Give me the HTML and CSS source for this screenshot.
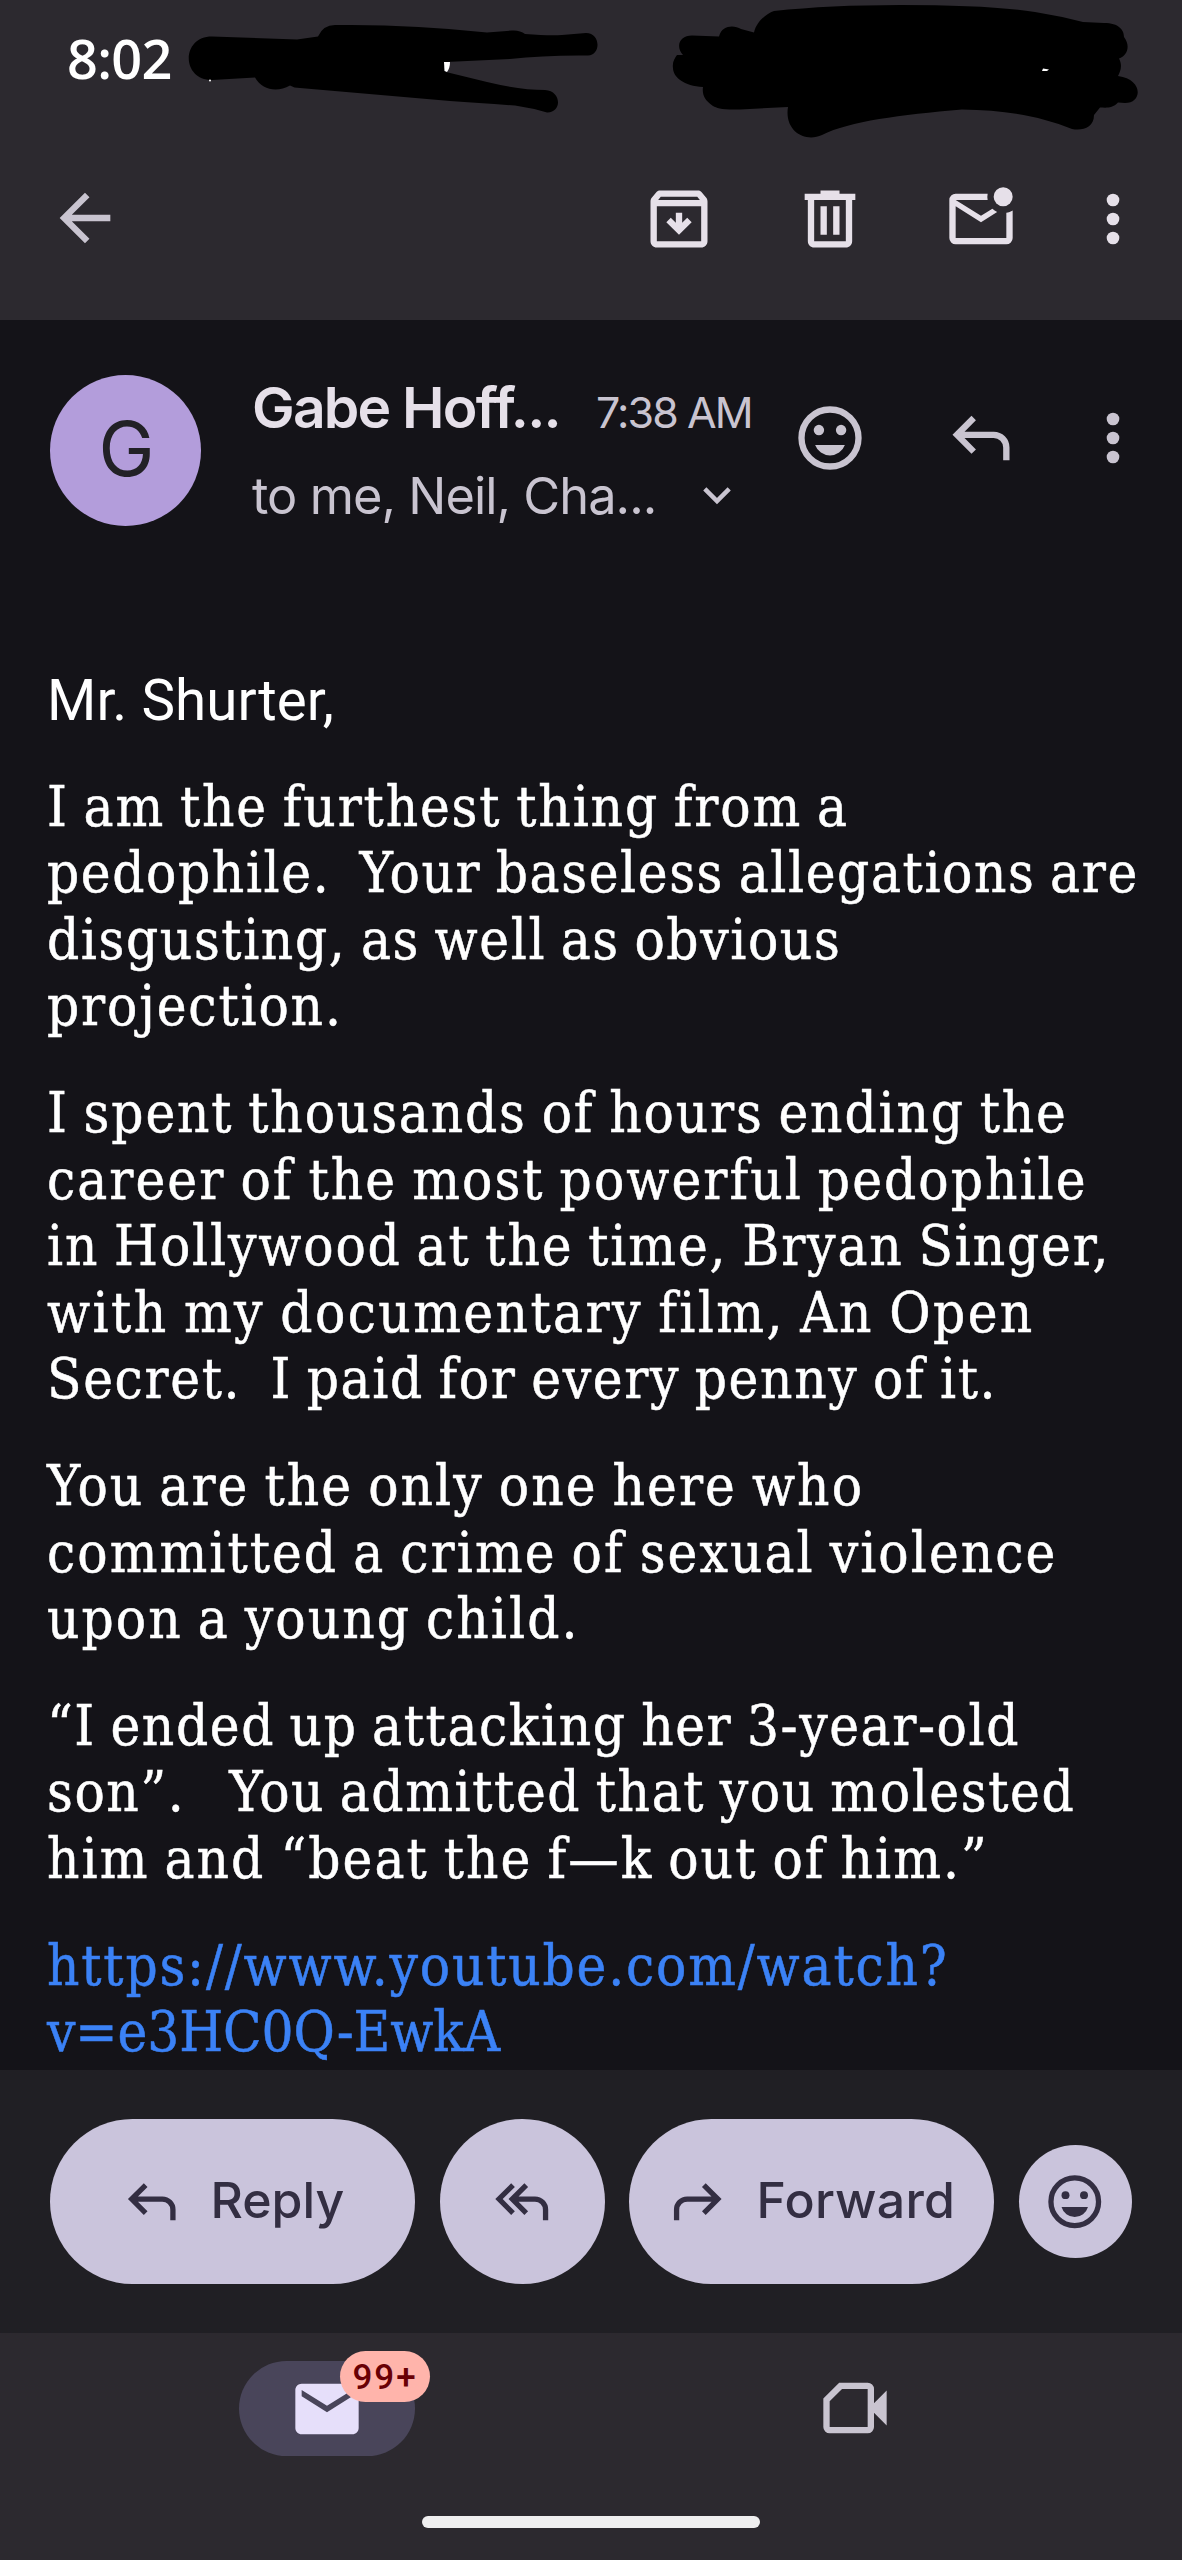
FILE: index.html
```html
<!DOCTYPE html>
<html lang="en">
<head>
<meta charset="utf-8">
<title>Mail</title>
<link rel="stylesheet" href="styles.css">
</head>
<body>
<div class="screen">
  <header class="top">
    <div class="status">
      <span class="clock">8:02</span>
      <svg class="marks" width="1182" height="150" viewBox="0 0 1182 150" aria-hidden="true">
        <path d="M212 36.500L297 39.500L318 36.500Q323 25 335 25Q410 24 487 32.500L512 30.500Q520 30 525 34Q550 36 562 35L586 33C601 33 601 55.500 588 55.500Q545 55 510 59L446 62V72L487 82Q520 90 545 90C562 91 562 113 547 112.500Q532 108 515 105.500Q480 103 450 101L300 88Q294 88 290 85.500C277 93 262 90 255 77.500L212 80C181 80 181 36.500 212 36.500Z"/>
        <path d="M683 55C675 46 680 35.500 692 35.500L719 36.500C722 25 734 25 741 29L754 32.500C757 20 768 13 774 11Q830 5 900 5Q990 5 1035 12Q1060 16 1083 22L1104 23C1119 23 1124 30 1124 37C1131 46 1127 56 1119 58.500C1123 66 1120 72 1118 76C1143 79 1143 103 1125 103L1118 102.500C1112 109 1105 107.500 1100 107.500L1094 115C1094 128 1082 131 1072 129C1040 116 1005 110 962 109.500C900 115 850 121 822 135C805 143 784 131 788 107L740 109.500C721 110 717 108 713 106C704 100 702 94 703 87C684 86 673 77 673 68C672 62 675 58 677 55Z"/>
        <path class="glint" d="M444 62L450 62Q450 68 447 72L444.500 71Z"/>
        <path class="glint" d="M1043 68.500L1049 69.500L1047 71L1042 71Z"/>
        <circle class="glint" cx="210" cy="80.500" r="1"/>
      </svg>
    </div>
    <div class="toolbar">
      <svg class="icon back" viewBox="0 0 24 24"><path d="M20 11H7.830l5.590-5.590L12 4l-8 8 8 8 1.410-1.410L7.830 13H20z"/></svg>
      <div class="tools">
        <svg class="icon" viewBox="0 0 24 24"><path fill-rule="evenodd" d="M20.540 5.230l-1.390-1.680C18.880 3.210 18.470 3 18 3H6c-.47 0-.88.21-1.160.55L3.460 5.230C3.170 5.570 3 6.020 3 6.500V19c0 1.100.9 2 2 2h14c1.100 0 2-.9 2-2V6.500c0-.48-.17-.93-.46-1.270zM6.240 5h11.520l.83 1H5.420zM5 19V8h14v11zm6-9h2v3.200l1.600-1.600L16 13l-4 4-4-4 1.400-1.400 1.600 1.600z"/></svg>
        <svg class="icon" viewBox="0 0 24 24"><path fill-rule="evenodd" d="M15 4V3H9v1H4v2h1v13c0 1.100.9 2 2 2h10c1.100 0 2-.9 2-2V6h1V4zm2 15H7V6h10zM9 8h2v9H9zm4 0h2v9h-2z"/></svg>
        <svg class="icon" viewBox="0 0 24 24"><circle cx="19" cy="5" r="3"/><path d="M14.100 4H4a2 2 0 0 0-2 2v12a2 2 0 0 0 2 2h16a2 2 0 0 0 2-2V9.300c-.6.400-1.300.65-2 .7v8H4V8l8 5 5.100-3.200a5 5 0 0 1-1.500-1L12 11 4 6h10.100A5 5 0 0 1 14.100 4z"/></svg>
        <svg class="icon more" viewBox="0 0 24 24"><circle cx="12" cy="6" r="2"/><circle cx="12" cy="12" r="2"/><circle cx="12" cy="18" r="2"/></svg>
      </div>
    </div>
  </header>

  <main class="message">
    <section class="sender">
      <div class="avatar">G</div>
      <div class="meta">
        <div class="line"><span class="name">Gabe Hoff...</span><span class="time">7:38 AM</span></div>
        <div class="line"><span class="to">to me, Neil, Cha...</span><svg class="chevron" viewBox="0 0 28 18"><path d="M1.800 1.800L14 14L26.200 1.800"/></svg></div>
      </div>
      <div class="tools muted">
        <svg class="icon" viewBox="0 0 24 24"><circle class="ring" cx="12" cy="12" r="9"/><circle cx="8.500" cy="9.500" r="1.650"/><circle cx="15.500" cy="9.500" r="1.650"/><path d="M7.300 14.200h9.400a5 5 0 0 1-9.400 0z"/></svg>
        <svg class="icon" viewBox="0 0 24 24"><path d="M19 19v-4a3 3 0 0 0-3-3H6.800l3.600 3.600L9 17l-6-6 6-6 1.400 1.400L6.800 10H16a5 5 0 0 1 5 5v4z"/></svg>
        <svg class="icon more" viewBox="0 0 24 24"><circle cx="12" cy="6" r="2"/><circle cx="12" cy="12" r="2"/><circle cx="12" cy="18" r="2"/></svg>
      </div>
    </section>

    <article class="body">
      <p class="greeting">Mr. Shurter,</p>
      <p>I am the furthest thing from a<br><span class="tight">pedophile.&nbsp; Your baseless allegations are</span><br><span class="tight">disgusting, as well as obvious</span><br>projection.</p>
      <p>I spent thousands of hours ending the<br><span class="loose">career of the most powerful pedophile</span><br>in Hollywood at the time, Bryan Singer,<br><span class="looser">with my documentary film, An Open</span><br><span class="tighter">Secret.&nbsp; I paid for every penny of it.</span></p>
      <p><span class="loose">You are the only one here who</span><br><span class="loose">committed a crime of sexual violence</span><br><span class="loose">upon a young child.</span></p>
      <p><span class="tight">“I ended up attacking her 3-year-old</span><br><span class="tight">son”.&nbsp;&nbsp; You admitted that you molested</span><br><span class="loose">him and “beat the f—k out of him.”</span></p>
      <p class="link"><span class="url">https://www.youtube.com/watch?</span><br><span class="narrow">v=e3HC0Q-EwkA</span></p>
    </article>
  </main>

  <section class="actions">
    <div class="btn wide">
      <svg class="glyph" viewBox="0 0 24 24"><path d="M19 19v-4a3 3 0 0 0-3-3H6.800l3.600 3.600L9 17l-6-6 6-6 1.400 1.400L6.800 10H16a5 5 0 0 1 5 5v4z"/></svg>
      <span class="label reply">Reply</span>
    </div>
    <div class="btn round">
      <svg class="glyph" viewBox="0 0 24 24"><path d="M20 19v-4a3 3 0 0 0-3-3h-6.200l3.600 3.600L13 17l-6-6 6-6 1.400 1.400L10.800 10H17a5 5 0 0 1 5 5v4zM8 17l-6-6 6-6 1.400 1.400L4.800 11l4.600 4.600z"/></svg>
    </div>
    <div class="btn wide forward">
      <svg class="glyph" viewBox="0 0 24 24"><path d="M5 19v-4a3 3 0 0 1 3-3h9.200l-3.600 3.600L15 17l6-6-6-6-1.400 1.400 3.600 3.600H8a5 5 0 0 0-5 5v4z"/></svg>
      <span class="label fwd">Forward</span>
    </div>
    <div class="btn small">
      <svg class="glyph" viewBox="0 0 24 24"><circle class="ring" cx="12" cy="12" r="9"/><circle cx="8.500" cy="9.500" r="1.500"/><circle cx="15.500" cy="9.500" r="1.500"/><path d="M7 14h10a5.200 5.200 0 0 1-10 0z"/></svg>
    </div>
  </section>

  <footer class="nav">
    <div class="tabs">
      <div class="tab">
        <div class="pill">
          <svg class="icon" viewBox="0 0 24 24"><path d="M20 4H4c-1.100 0-2 .9-2 2v12c0 1.100.9 2 2 2h16c1.100 0 2-.9 2-2V6c0-1.100-.9-2-2-2zm0 4l-8 5-8-5V6l8 5 8-5z"/></svg>
          <span class="badge">99+</span>
        </div>
      </div>
      <div class="tab">
        <svg class="icon video" viewBox="0 0 24 24"><path fill-rule="evenodd" d="M7 4h9a2 2 0 0 1 2 2v4.500l4-4v11l-4-4V18a2 2 0 0 1-2 2H4a2 2 0 0 1-2-2V9zm.9 2L4 9.900V18h12V6z"/></svg>
      </div>
    </div>
    <div class="home"></div>
  </footer>
</div>
</body>
</html>
```

FILE: styles.css
```css
* { box-sizing: border-box; }
body { margin: 0; background: #141318; font-family: Inter, "Open Sans", sans-serif; }
.screen { width: 1182px; height: 2560px; display: flex; flex-direction: column; overflow: hidden; }
.icon { width: 76px; height: 76px; flex: none; fill: currentColor; display: block; }
.ring { fill: none; stroke: currentColor; stroke-width: 2; }

.top { height: 320px; background: #2c292f; color: #e6e0e9; flex: none; }
.status { position: relative; height: 120px; padding: 22px 0 0 67px; }
.clock { display: block; font: 600 54px/72px "Open Sans", sans-serif; letter-spacing: -0.700px; color: #fff; }
.marks { position: absolute; left: 0; top: 0; }
.glint { fill: #fff; }
.toolbar { display: flex; justify-content: space-between; height: 198px; align-items: center; padding: 0 31px 0 47px; }
.back { color: #c9c4d0; margin-bottom: 2px; }
.tools { display: flex; gap: 75px; }
.tools .more { margin-left: -19px; }

.message { height: 1750px; flex: none; background: #141318; overflow: hidden; }
.sender { display: flex; align-items: flex-start; height: 322px; padding: 55px 31px 0 50px; }
.avatar { width: 151px; height: 151px; border-radius: 50%; background: #b39ddb; color: #222126; font-size: 75px; line-height: 147px; text-align: center; padding-left: 2px; }
.meta { width: 541px; padding-left: 51px; }
.line { display: flex; align-items: baseline; height: 86px; line-height: 66px; white-space: nowrap; }
.name { width: 344px; flex: none; font-size: 57px; font-weight: 600; letter-spacing: -1.800px; color: #e6e0e9; }
.time { font-size: 43px; letter-spacing: -1.900px; color: #c9c4d0; }
.to { width: 451px; padding-top: 2px; font-size: 50.500px; letter-spacing: -0.950px; color: #c9c4d0; }
.chevron { width: 28px; height: 18px; fill: none; stroke: #c9c4d0; stroke-width: 4.500; align-self: flex-start; margin-top: 26px; }
.tools.muted { padding-top: 25px; margin-left: 50px; color: #c9c4d0; }

.body { padding: 26px 0 0 47px; color: #fff; font: 56px/66.600px "DejaVu Serif Condensed", "DejaVu Serif", serif; -webkit-text-stroke: 0.500px; white-space: nowrap; }
.body p { margin: 0 0 40px; letter-spacing: 1.850px; word-spacing: -3px; }
.body .greeting { margin-bottom: 39px; font-family: Roboto, sans-serif; font-size: 56.500px; letter-spacing: 0.100px; word-spacing: 0; -webkit-text-stroke: 0; }
.body .loose { letter-spacing: 2.050px; }
.body .looser { letter-spacing: 2.400px; }
.body .tight { letter-spacing: 1.600px; }
.body .tighter { letter-spacing: 1.650px; }
.body .url { letter-spacing: 1.820px; }
.body .narrow { letter-spacing: -0.100px; }
.body .link { color: #3b82f6; }

.actions { height: 263px; flex: none; background: #201f24; display: flex; align-items: center; gap: 24.500px; padding: 0 50px; color: #332e42; }
.btn { background: #cac4dc; border-radius: 83px; height: 165px; display: flex; align-items: center; flex: none; }
.wide { width: 365px; padding-left: 70px; }
.round { width: 165px; justify-content: center; }
.small { width: 113px; height: 113px; justify-content: center; }
.glyph { width: 63.500px; height: 63.500px; fill: currentColor; flex: none; }
.label { font-size: 50px; font-weight: 500; padding-bottom: 3px; }
.reply { margin-left: 27px; }
.forward { padding-left: 37px; }
.fwd { margin-left: 27px; letter-spacing: 0.300px; }

.nav { height: 227px; flex: none; background: #2c292f; padding: 28px 63px 0; }
.tabs { display: flex; height: 155px; }
.tab { flex: 1; display: flex; justify-content: center; align-items: flex-start; }
.pill { position: relative; width: 176px; height: 95px; border-radius: 48px; background: #49455a; color: #e6dffa; display: flex; align-items: center; justify-content: center; }
.badge { position: absolute; left: 101px; top: -10px; width: 90px; height: 51px; border-radius: 26px; background: #ffb4ab; color: #690005; font: 500 35px/53px Roboto, sans-serif; letter-spacing: 2px; text-align: center; }
.video { color: #c9c4d0; margin-top: 9px; }
.home { width: 338px; height: 12px; border-radius: 6px; background: #f0eff0; margin: 0 auto; }
```
